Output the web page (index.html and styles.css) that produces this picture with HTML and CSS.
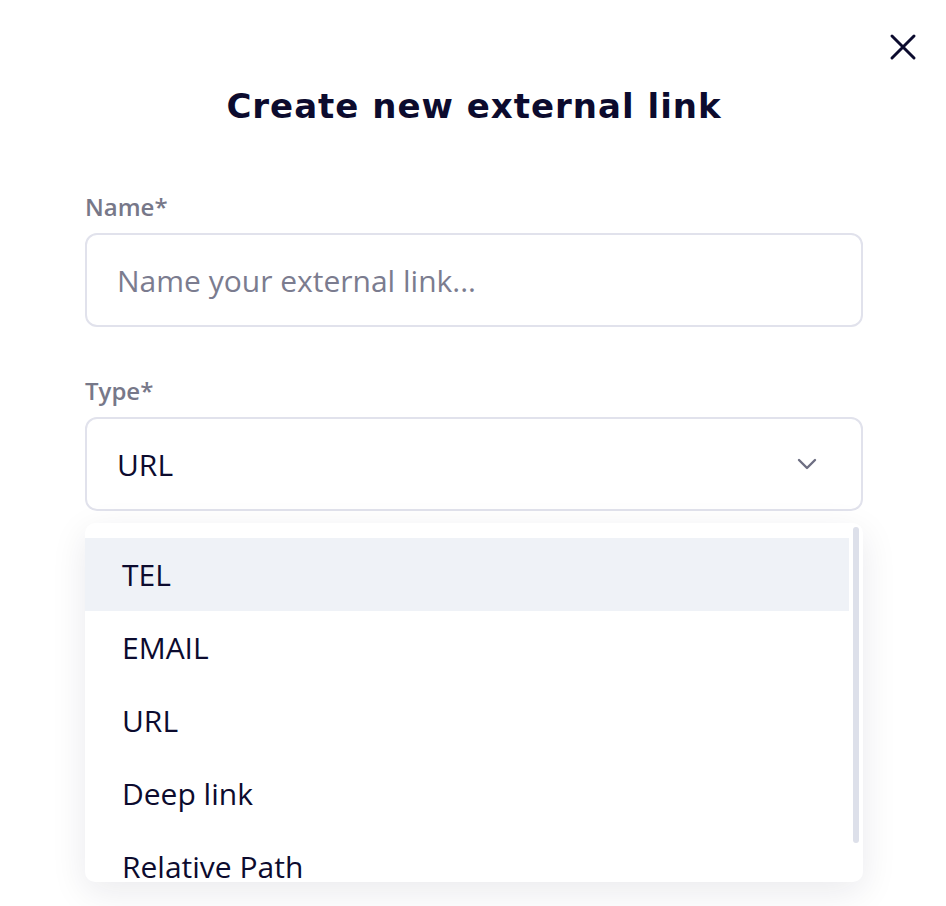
FILE: index.html
```html
<!DOCTYPE html>
<html lang="en">
<head>
    <meta charset="UTF-8">
    <meta name="viewport" content="width=device-width, initial-scale=1.0">
    <title>Create new external link</title>
    <link rel="stylesheet" href="styles.css">
</head>
<body>
    <!-- Modal window -->
    <div class="modal">
        <button class="close" aria-label="Close">
            <svg width="28" height="28" viewBox="0 0 28 28" fill="none">
                <path d="M3 3L25 25M25 3L3 25" stroke="#0c0b2e" stroke-width="3" stroke-linecap="round"/>
            </svg>
        </button>

        <h1 class="title">Create new external link</h1>

        <!-- Name field -->
        <div class="field">
            <label class="label" for="name">Name*</label>
            <input type="text" class="input" id="name" placeholder="Name your external link...">
        </div>

        <!-- Type field with open dropdown -->
        <div class="field">
            <label class="label">Type*</label>
            <div class="select">
                <span class="select-value">URL</span>
                <svg class="chevron" width="20" height="12" viewBox="0 0 20 12" fill="none">
                    <path d="M2 2L10 10L18 2" stroke="#6d6e82" stroke-width="2.4" stroke-linecap="round" stroke-linejoin="round"/>
                </svg>
            </div>
            <div class="dropdown">
                <ul class="options">
                    <li class="option active">TEL</li>
                    <li class="option">EMAIL</li>
                    <li class="option">URL</li>
                    <li class="option">Deep link</li>
                    <li class="option">Relative Path</li>
                </ul>
                <div class="scrollbar"></div>
            </div>
        </div>
    </div>
</body>
</html>
```

FILE: styles.css
```css
/* Base */
body {
    margin: 0;
    background-color: #ffffff;
    font-family: "Open Sans", "Noto Sans", sans-serif;
    color: #0c0b2e;
}

/* Modal container */
.modal {
    position: relative;
    padding: 82px 83px 0 85px;
    height: 906px;
    box-sizing: border-box;
}

.close {
    position: absolute;
    top: 33px;
    right: 29px;
    padding: 0;
    border: none;
    background: none;
    cursor: pointer;
    line-height: 0;
}

.title {
    margin: 0 0 61px;
    font-family: "DejaVu Sans", sans-serif;
    font-weight: 700;
    font-size: 34px;
    line-height: 48px;
    letter-spacing: 1px;
    text-align: center;
}

/* Form fields */
.field {
    display: flex;
    flex-direction: column;
    margin-bottom: 48px;
}

.label {
    font-weight: 600;
    font-size: 24px;
    line-height: 32px;
    color: #777889;
    margin-bottom: 10px;
}

.input,
.select {
    box-sizing: border-box;
    height: 94px;
    border: 2px solid #e1e2ec;
    border-radius: 12px;
    padding: 0 30px;
    font-family: inherit;
    font-size: 30px;
    color: #0c0b2e;
    background: #ffffff;
    outline: none;
}

.input::placeholder {
    color: #7b7c8f;
}

.select {
    display: flex;
    align-items: center;
    justify-content: space-between;
    padding-right: 44px;
}

/* Dropdown list */
.dropdown {
    position: relative;
    margin-top: 12px;
    height: 359px;
    overflow: hidden;
    border-radius: 10px;
    background: #ffffff;
    box-shadow: 0 10px 36px rgba(20, 20, 50, 0.09);
}

.options {
    list-style: none;
    margin: 15px 14px 0 0;
    padding: 0;
}

.option {
    height: 73px;
    display: flex;
    align-items: center;
    padding-left: 37px;
    font-size: 30px;
}

.option.active {
    background-color: #eff2f7;
}

.scrollbar {
    position: absolute;
    top: 4px;
    right: 4px;
    width: 6px;
    height: 316px;
    border-radius: 3px;
    background-color: #dde0ea;
}
```
